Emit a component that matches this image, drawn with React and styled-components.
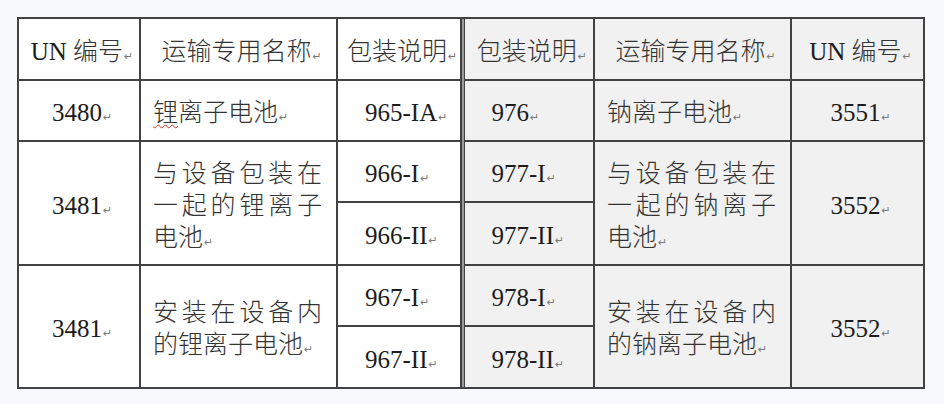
import React from "react";
import styled, { createGlobalStyle } from "styled-components";

const Global = createGlobalStyle`
  html, body { margin: 0; padding: 0; background: #f8f9fd; }
  body { font-family: "Liberation Serif", "Noto Sans CJK SC", serif; }
`;

const Wrap = styled.div`
  padding: 17px 0 0 17px;
`;

const Table = styled.table`
  border-collapse: collapse;
  table-layout: fixed;
  width: 906px;
  font-family: "Liberation Serif", "Noto Sans CJK SC", serif;
  font-size: 25px;
  color: #1c1c1c;
`;

const Row = styled.tr`
  height: ${(p) => p.$h}px;
`;

const Cell = styled.td`
  border: 2px solid #424242;
  background: ${(p) => (p.$shade ? "#f1f1f1" : "#ffffff")};
  text-align: ${(p) => p.$align || "center"};
  padding: ${(p) =>
    p.$align === "left"
      ? "5px 6px 0 27px"
      : p.$align === "justify"
      ? "5px 14px 0 12px"
      : "5px 2px 0 8px"};
  line-height: 32px;
  vertical-align: middle;
  overflow: hidden;
  ${(p) => (p.$thinLeft ? "border-left-width: 1px;" : "")}
`;

const Head = styled(Cell).attrs({ as: "th" })`
  font-weight: 400;
  white-space: nowrap;
`;

const Spacer = styled.td`
  padding: 0;
  background: #9a9a9a;
  border-top: 2px solid #424242;
  border-bottom: 2px solid #424242;
  border-left: none;
  border-right: none;
`;

const Zh = styled.span`
  color: #333333;
  font-weight: 300;
`;

const Squiggle = styled.span`
  text-decoration: underline wavy #e0302a;
  text-decoration-thickness: 1px;
  text-underline-offset: 3px;
`;

const Mark = styled.span`
  font-family: "DejaVu Sans", sans-serif;
  font-size: 11px;
  color: #7a7a7a;
  margin-left: 1px;
  line-height: 1;
`;

const P = () => <Mark>↵</Mark>;

export default function App() {
  return (
    <>
      <Global />
      <Wrap>
        <Table>
          <colgroup>
            <col style={{ width: 122 }} />
            <col style={{ width: 197 }} />
            <col style={{ width: 124 }} />
            <col style={{ width: 3 }} />
            <col style={{ width: 130 }} />
            <col style={{ width: 197 }} />
            <col style={{ width: 133 }} />
          </colgroup>
          <tbody>
            <Row $h={62}>
              <Head>UN <Zh>编号</Zh><P /></Head>
              <Head><Zh>运输专用名称</Zh><P /></Head>
              <Head><Zh>包装说明</Zh><P /></Head>
              <Spacer rowSpan={6} />
              <Head $shade $thinLeft><Zh>包装说明</Zh><P /></Head>
              <Head $shade><Zh>运输专用名称</Zh><P /></Head>
              <Head $shade>UN <Zh>编号</Zh><P /></Head>
            </Row>
            <Row $h={61}>
              <Cell>3480<P /></Cell>
              <Cell $align="justify"><Zh><Squiggle>锂</Squiggle>离子电池</Zh><P /></Cell>
              <Cell $align="left">965-IA<P /></Cell>
              <Cell $shade $thinLeft $align="left">976<P /></Cell>
              <Cell $shade $align="justify"><Zh>钠离子电池</Zh><P /></Cell>
              <Cell $shade>3551<P /></Cell>
            </Row>
            <Row $h={61}>
              <Cell rowSpan={2}>3481<P /></Cell>
              <Cell rowSpan={2} $align="justify"><Zh>与设备包装在一起的锂离子电池</Zh><P /></Cell>
              <Cell $align="left">966-I<P /></Cell>
              <Cell $shade $thinLeft $align="left">977-I<P /></Cell>
              <Cell rowSpan={2} $shade $align="justify"><Zh>与设备包装在一起的钠离子电池</Zh><P /></Cell>
              <Cell rowSpan={2} $shade>3552<P /></Cell>
            </Row>
            <Row $h={63}>
              <Cell $align="left">966-II<P /></Cell>
              <Cell $shade $thinLeft $align="left">977-II<P /></Cell>
            </Row>
            <Row $h={61}>
              <Cell rowSpan={2}>3481<P /></Cell>
              <Cell rowSpan={2} $align="justify"><Zh>安装在设备内的锂离子电池</Zh><P /></Cell>
              <Cell $align="left">967-I<P /></Cell>
              <Cell $shade $thinLeft $align="left">978-I<P /></Cell>
              <Cell rowSpan={2} $shade $align="justify"><Zh>安装在设备内的钠离子电池</Zh><P /></Cell>
              <Cell rowSpan={2} $shade>3552<P /></Cell>
            </Row>
            <Row $h={62}>
              <Cell $align="left">967-II<P /></Cell>
              <Cell $shade $thinLeft $align="left">978-II<P /></Cell>
            </Row>
          </tbody>
        </Table>
      </Wrap>
    </>
  );
}
